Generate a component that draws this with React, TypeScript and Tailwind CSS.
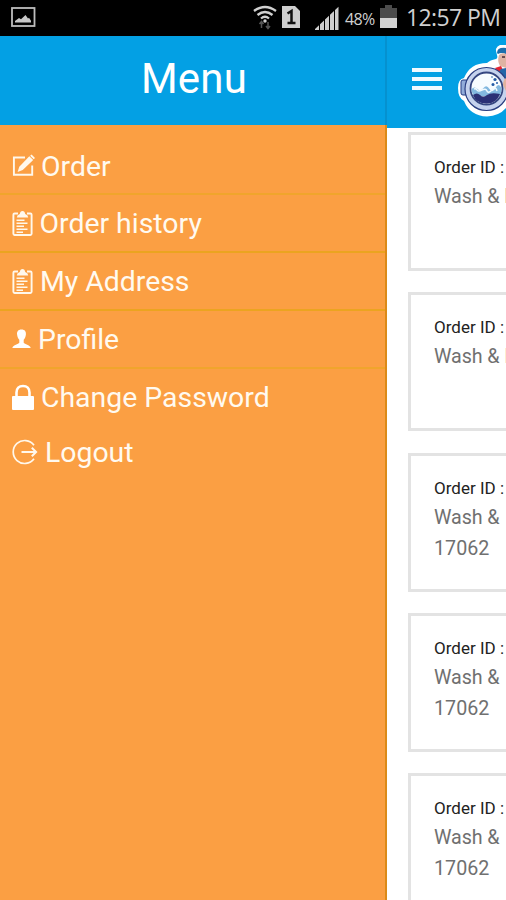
import type { ReactNode } from "react";

type MenuItem = {
  label: string;
  icon: ReactNode;
  row: string;
  text: string;
};

const EditIcon = () => (
  <svg width="23" height="24" viewBox="0 0 23 24" fill="none">
    <path d="M13 3.500H1.900v17.200h18.300V11.500" stroke="#fff8ec" strokeWidth="1.900" />
    <path d="M17.300 2.200l3.900 3.700L10.700 16l-5.100 1.900 1.700-5.200z" fill="#fff8ec" />
    <path d="M18.100 1.700l1.500-1.100 3.400 3.300-1.300 1.400z" fill="#fff8ec" />
  </svg>
);

const ClipboardIcon = () => (
  <svg width="21" height="27" viewBox="0 0 21 27" fill="none">
    <path
      d="M6 3.500H2.600Q1.400 3.500 1.400 4.700v19.100q0 1.200 1.200 1.200h15.800q1.200 0 1.200-1.200V4.700q0-1.200-1.200-1.200H15"
      stroke="#fff8ec"
      strokeWidth="1.900"
    />
    <path d="M4.800 7.500q.2-2.700 3-3.400Q8.200.9 10.500.9T13.200 4.100q2.800.7 3 3.400z" fill="#fff8ec" />
    <path
      d="M4.500 10.200h8M4.500 13.200h11M4.500 16.200h7.500M4.500 19.200h11M4.500 22.200h6.500"
      stroke="#fff8ec"
      strokeWidth="1.500"
    />
  </svg>
);

const PersonIcon = () => (
  <svg width="19" height="20" viewBox="0 0 19 20">
    <path
      d="M9.500 0.500c-3.500 0-4.700 2.200-4.400 5 .2 2.300 1 4 2.200 5.200v3c-1 1.600-6 1.700-7 5.300h18.400c-1-3.600-6-3.700-7-5.300v-3c1.200-1.200 2-2.900 2.200-5.200.3-2.800-.9-5-4.400-5z"
      fill="#fff"
    />
  </svg>
);

const LockIcon = () => (
  <svg width="22" height="27" viewBox="0 0 22 27">
    <path d="M4.500 13V8.500C4.500 4.500 7 2 11 2s6.500 2.500 6.500 6.500V13" fill="none" stroke="#fff" strokeWidth="2.600" />
    <rect x="0" y="12" width="22" height="14" rx="1" fill="#fff" />
  </svg>
);

const LogoutIcon = () => (
  <svg width="26" height="27" viewBox="0 0 26 27" fill="none" stroke="#fff8ec" strokeWidth="1.700">
    <path d="M22 6.200A11.500 11.500 0 1 0 22 19.800" />
    <path d="M9.500 13h14.500M19.800 8.800l4.300 4.200-4.300 4.200" strokeWidth="2" />
  </svg>
);

const items: MenuItem[] = [
  { label: "Order", icon: <EditIcon />, row: "h-[57px] border-b-2 border-[#f0a52c]", text: "ml-[6px] pt-[3px]" },
  { label: "Order history", icon: <ClipboardIcon />, row: "h-[58px] border-b-2 border-[#eba420]", text: "ml-[6.500px] pt-[3px]" },
  { label: "My Address", icon: <ClipboardIcon />, row: "h-[58px] border-b-2 border-[#eba420]", text: "ml-[7px] pt-[3px]" },
  { label: "Profile", icon: <PersonIcon />, row: "h-[58px] border-b-2 border-[#f0a52c]", text: "ml-[7px] pt-[3px]" },
  { label: "Change Password", icon: <LockIcon />, row: "h-[56px]", text: "ml-[7px] pt-[2px]" },
  { label: "Logout", icon: <LogoutIcon />, row: "h-[55px]", text: "ml-[7px] pt-[2px]" },
];

const orders = [
  { service: "Wash & Fold", code: "" },
  { service: "Wash & Iron", code: "" },
  { service: "Wash &", code: "17062" },
  { service: "Wash &", code: "17062" },
  { service: "Wash &", code: "17062" },
];

const StatusBar = () => (
  <div className="flex h-9 shrink-0 items-center bg-black text-[#d0d0d0]">
    <svg className="-mt-0.5 ml-[11px]" width="25" height="20" viewBox="0 0 25 20">
      <rect x="1" y="1" width="22.500" height="18" fill="none" stroke="#bdbdbd" strokeWidth="1.800" />
      <path d="M4 15.500v-1.500l4-3 2 1.300L14.500 8l2.500 3.500 1-.7 2 3v1.700z" fill="#c8c8c8" />
    </svg>
    <svg className="ml-[217px]" width="25" height="26" viewBox="0 0 25 26" fill="none" stroke="#d0d0d0">
      <path d="M1 6Q12 -2 23 6M4.500 10Q12 4 19.500 10M8 13.500Q12 10 16 13.500" strokeWidth="2.300" />
      <circle cx="12" cy="16" r="1.700" fill="#d0d0d0" stroke="none" />
      <path d="M8.500 23v-6M6.500 19l2-2.500 2 2.500M15 17v6M13 21l2 2.500 2-2.500" stroke="#555" strokeWidth="1.500" />
    </svg>
    <svg className="-mt-0.5 ml-1" width="18" height="24" viewBox="0 0 18 24">
      <path d="M0 1h13l5 5v17H0z" fill="#cecece" />
      <path d="M5.500 8.500L9.500 6v12M5.500 18h8" fill="none" stroke="#111" strokeWidth="2.500" />
    </svg>
    <svg className="ml-[15px]" width="24" height="24" viewBox="0 0 24 24" fill="#cecece">
      <path d="M0 24v-1l4-3.800V24zM5 24v-5.700l4-3.800V24zM10 24V13.600l4-3.800V24zM15 24V8.800l4-3.800v19zM20 24V4.100L23.500.8V24z" />
    </svg>
    <span className="ml-[6px] w-[33px] whitespace-nowrap pt-px font-['Open_Sans',sans-serif] text-[16px] font-medium tracking-[-0.7px]">
      48%
    </span>
    <svg className="-mt-0.5 ml-[2px]" width="17" height="24" viewBox="0 0 17 24">
      <path d="M5 0h7v3h5v10H0V3h5z" fill="#4b4b4b" />
      <path d="M0 13h17v10H0z" fill="#d2d2d2" />
    </svg>
    <span className="-mt-0.5 ml-[9px] whitespace-nowrap font-['Open_Sans',sans-serif] text-[23px] font-medium tracking-[-0.6px]">
      12:57 PM
    </span>
  </div>
);

const Logo = () => (
  <svg className="ml-[15px] shrink-0" width="49" height="76" viewBox="0 0 49 76">
    <path
      d="M40 12Q37 4 43 2h6v63q-7 8-19 8.500Q13 73 7 58 1 55 1 45q0-9 6-10Q13 20 30 20q3-3 9-4 2-1 1-4z"
      fill="#fff"
    />
    <path d="M40 10q0-6 9-5v6q-5-2-8 0z" fill="#1d6fae" />
    <path d="M42 12q3-3 7-1v14l-6-2q-3-5-1-11z" fill="#dfb3a3" />
    <path d="M45 13h3v2h-3z" fill="#6b4a50" />
    <path d="M38 25l6-2 2 4-5 2z" fill="#e52532" />
    <path d="M44 26l5-1v12q-2-5-7-8z" fill="#2466a8" />
    <rect x="4" y="37" width="7" height="15" rx="2" fill="#92acd9" stroke="#253d83" />
    <circle cx="29.500" cy="46" r="21.500" fill="#c5d2ed" stroke="#293d80" strokeWidth="1.200" />
    <circle cx="29.500" cy="45.500" r="16" fill="#f7fcff" stroke="#354680" strokeWidth="1.800" />
    <path d="M14.500 46q3-3 6 0t6-1 6 1 6-1 6 0q0 5-2 8H17q-3-4-2.500-8z" fill="#83b8df" />
    <path d="M17 46q2-1 3 1t5 0 5 1 5-1 5 1" fill="none" stroke="#f0faff" strokeWidth="1.500" />
    <path d="M16 52q4-3 7 0t7 0 13-1q-3 9.500-13.500 9.500T16 52z" fill="#2b3075" />
    <g fill="#245ba6">
      <circle cx="36" cy="41.500" r="1.500" />
      <circle cx="38" cy="36.500" r="1.600" />
      <circle cx="35" cy="34" r=".8" />
      <circle cx="40" cy="40" r="1" />
    </g>
    <path d="M49 35q-3 2-3 7l3 6z" fill="#e3b29e" />
  </svg>
);

const Menu = () => (
  <aside className="flex w-[387px] shrink-0 flex-col border-r-2 border-[#dc8a18] bg-[#fb9f43]">
    <h1 className="-mr-0.5 h-[89px] border-r-2 border-[#0591cf] bg-[#03a0e4] pl-[3px] pt-px text-center text-[42px] leading-[84px] tracking-[0.2px] text-white">
      Menu
    </h1>
    <ul className="pt-[13px]">
      {items.map((item) => (
        <li key={item.label} className={`flex items-center pl-3 text-[#fffaf0] ${item.row}`}>
          {item.icon}
          <span className={`whitespace-nowrap text-[28.4px] leading-none ${item.text}`}>{item.label}</span>
        </li>
      ))}
    </ul>
  </aside>
);

const App = () => {
  return (
    <div className="flex h-[900px] w-[506px] flex-col overflow-hidden bg-white font-[Roboto,sans-serif]">
      <StatusBar />
      <div className="flex min-h-0 flex-1">
        <Menu />
        <main className="flex min-w-0 flex-1 flex-col overflow-hidden">
          <header className="flex h-[92px] shrink-0 items-start bg-[#03a0e4] pl-[25px] pt-[7px]">
            <div className="mt-[25px] flex w-[30px] shrink-0 flex-col gap-[5px]">
              <div className="h-1 bg-[#f1faff]" />
              <div className="h-1 bg-[#f1faff]" />
              <div className="h-1 bg-[#f1faff]" />
            </div>
            <Logo />
          </header>
          <div className="flex flex-col gap-[21.3px] pl-[21px] pt-1">
            {orders.map((order, i) => (
              <div
                key={i}
                className="h-[139px] w-[300px] shrink-0 border-[3px] border-[#e3e3e3] pl-[23px] pt-[21px]"
              >
                <p className="whitespace-nowrap text-[17px] leading-[22px] text-[#222]">Order ID :</p>
                <p className="mt-[3px] whitespace-nowrap text-[19.7px] leading-[31px] tracking-[-0.1px] text-[#707070]">
                  {order.service}
                </p>
                <p className="text-[19.7px] leading-[31px] text-[#707070]">{order.code}</p>
              </div>
            ))}
          </div>
        </main>
      </div>
    </div>
  );
};

export default App;
